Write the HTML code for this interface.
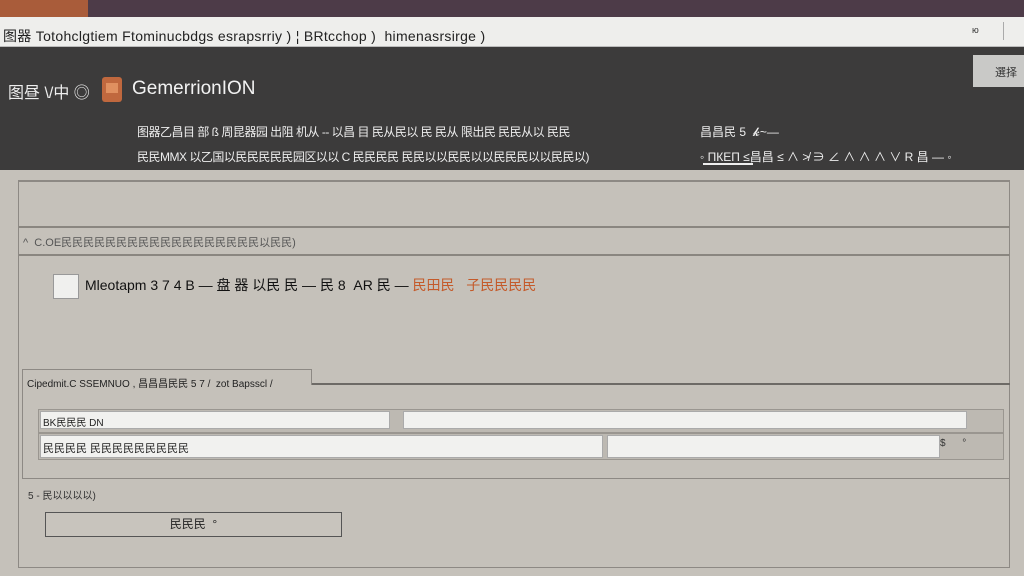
<!DOCTYPE html>
<html><head><meta charset="utf-8"><style>
*{margin:0;padding:0;box-sizing:border-box}
body{width:1024px;height:576px;overflow:hidden;background:#c5c1ba;font-family:"Liberation Sans","Noto Sans CJK SC",sans-serif;position:relative}
.a{position:absolute;white-space:nowrap}
</style></head><body>
<div class="a" style="left:0;top:0;width:1024px;height:17px;background:#4d3b48"></div>
<div class="a" style="left:0;top:0;width:88px;height:17px;background:#a95c3a"></div>
<div class="a" style="left:0;top:17px;width:1024px;height:30px;background:#eeeeec;border-bottom:1px solid #bbb"></div>
<div class="a" style="left:3px;top:26px;font-size:14px;color:#222;letter-spacing:0.3px">图器 Totohclgtiem Ftominucbdgs esrapsrriy ) ¦ BRtcchop ) &nbsp;himenasrsirge )</div>
<div class="a" style="left:972px;top:25px;font-size:9px;color:#333">ю</div>
<div class="a" style="left:1003px;top:22px;width:1px;height:18px;background:#aaa"></div>
<div class="a" style="left:0;top:47px;width:1024px;height:123px;background:#3c3b3b"></div>
<div class="a" style="left:8px;top:79px;font-size:16px;color:#eee">图昼 \/中 ◎</div>
<div class="a" style="left:102px;top:77px;width:20px;height:25px;background:#c0683e;border-radius:3px"></div>
<div class="a" style="left:106px;top:83px;width:12px;height:10px;background:#e09060"></div>
<div class="a" style="left:132px;top:78px;font-size:19px;color:#f2f2f2">GemerrionION</div>
<div class="a" style="left:973px;top:55px;width:51px;height:32px;background:#c9c9c7"></div>
<div class="a" style="left:995px;top:64px;font-size:11px;color:#333">選择</div>
<div class="a" style="left:137px;top:123px;font-size:12px;color:#eee;letter-spacing:-0.5px">图器乙昌目 部 ß 周昆器园 出阻 机从 -- 以昌 目 民从民以 民 民从 限出民 民民从以 民民</div>
<div class="a" style="left:137px;top:148px;font-size:12px;color:#eee;letter-spacing:-0.5px">民民MMX 以乙国以民民民民民园区以以 C 民民民民 民民以以民民以以民民民以以民民以)</div>
<div class="a" style="left:700px;top:123px;font-size:12px;color:#eee">昌昌民 5 &nbsp;𝓴~—</div>
<div class="a" style="left:700px;top:148px;font-size:12px;color:#eee">◦ ПКЕП ≤昌昌 ≤ ∧ ≯ ∋ ∠ ∧ ∧ ∧ ∨ R 昌 — ◦</div>
<div class="a" style="left:703px;top:163px;width:50px;height:2px;background:#eee"></div>
<div class="a" style="left:18px;top:180px;width:992px;height:388px;border:1px solid #8d8984;border-top:2px solid #8d8984"></div>
<div class="a" style="left:19px;top:226px;width:991px;height:2px;background:#8a8680"></div>
<div class="a" style="left:19px;top:254px;width:991px;height:2px;background:#8a8680"></div>
<div class="a" style="left:23px;top:234px;font-size:11px;color:#555">^ &nbsp;C.OE民民民民民民民民民民民民民民民民民民以民民)</div>
<div class="a" style="left:53px;top:274px;width:26px;height:25px;background:#f0f0ee;border:1px solid #999"></div>
<div class="a" style="left:85px;top:275px;font-size:14px;color:#111">Mleotapm 3 7 4 B — 盘 器 以民 民 — 民 8 &nbsp;AR 民 — <span style="color:#c45a2a">民田民 &nbsp;&nbsp;子民民民民</span></div>
<div class="a" style="left:22px;top:369px;width:988px;height:110px;border:1px solid #8d8984;border-top:none"></div>
<div class="a" style="left:22px;top:369px;width:290px;height:16px;border-top:1px solid #8d8984;border-right:1px solid #8d8984"></div>
<div class="a" style="left:312px;top:383px;width:698px;height:2px;background:#6d6a66"></div>
<div class="a" style="left:27px;top:375px;font-size:10px;color:#222">Cipedmit.C SSEMNUO , 昌昌昌民民 5 7 / &nbsp;zot Bapsscl /</div>
<div class="a" style="left:38px;top:409px;width:966px;height:24px;border:1px solid #9a9690;background:#bdb9b2"></div>
<div class="a" style="left:40px;top:411px;width:350px;height:18px;background:#f1f1ef;border:1px solid #aaa;font-size:10px;padding:2px 2px;color:#222">BK民民民 DN</div>
<div class="a" style="left:403px;top:411px;width:564px;height:18px;background:#f1f1ef;border:1px solid #aaa"></div>
<div class="a" style="left:38px;top:433px;width:966px;height:27px;border:1px solid #9a9690;background:#bdb9b2"></div>
<div class="a" style="left:40px;top:435px;width:563px;height:23px;background:#f1f1ef;border:1px solid #aaa;font-size:11px;padding:4px 2px;color:#222">民民民民 民民民民民民民民民</div>
<div class="a" style="left:607px;top:435px;width:333px;height:23px;background:#f1f1ef;border:1px solid #aaa"></div>
<div class="a" style="left:940px;top:438px;font-size:10px;color:#333">$ &nbsp;&nbsp;&nbsp;&nbsp;&nbsp;°</div>
<div class="a" style="left:28px;top:487px;font-size:10px;color:#333">5 - 民以以以以)</div>
<div class="a" style="left:45px;top:512px;width:297px;height:25px;border:1px solid #555;background:#c8c4bd;text-align:center;font-size:12px;line-height:23px;color:#222">民民民 &nbsp;°</div>
</body></html>
